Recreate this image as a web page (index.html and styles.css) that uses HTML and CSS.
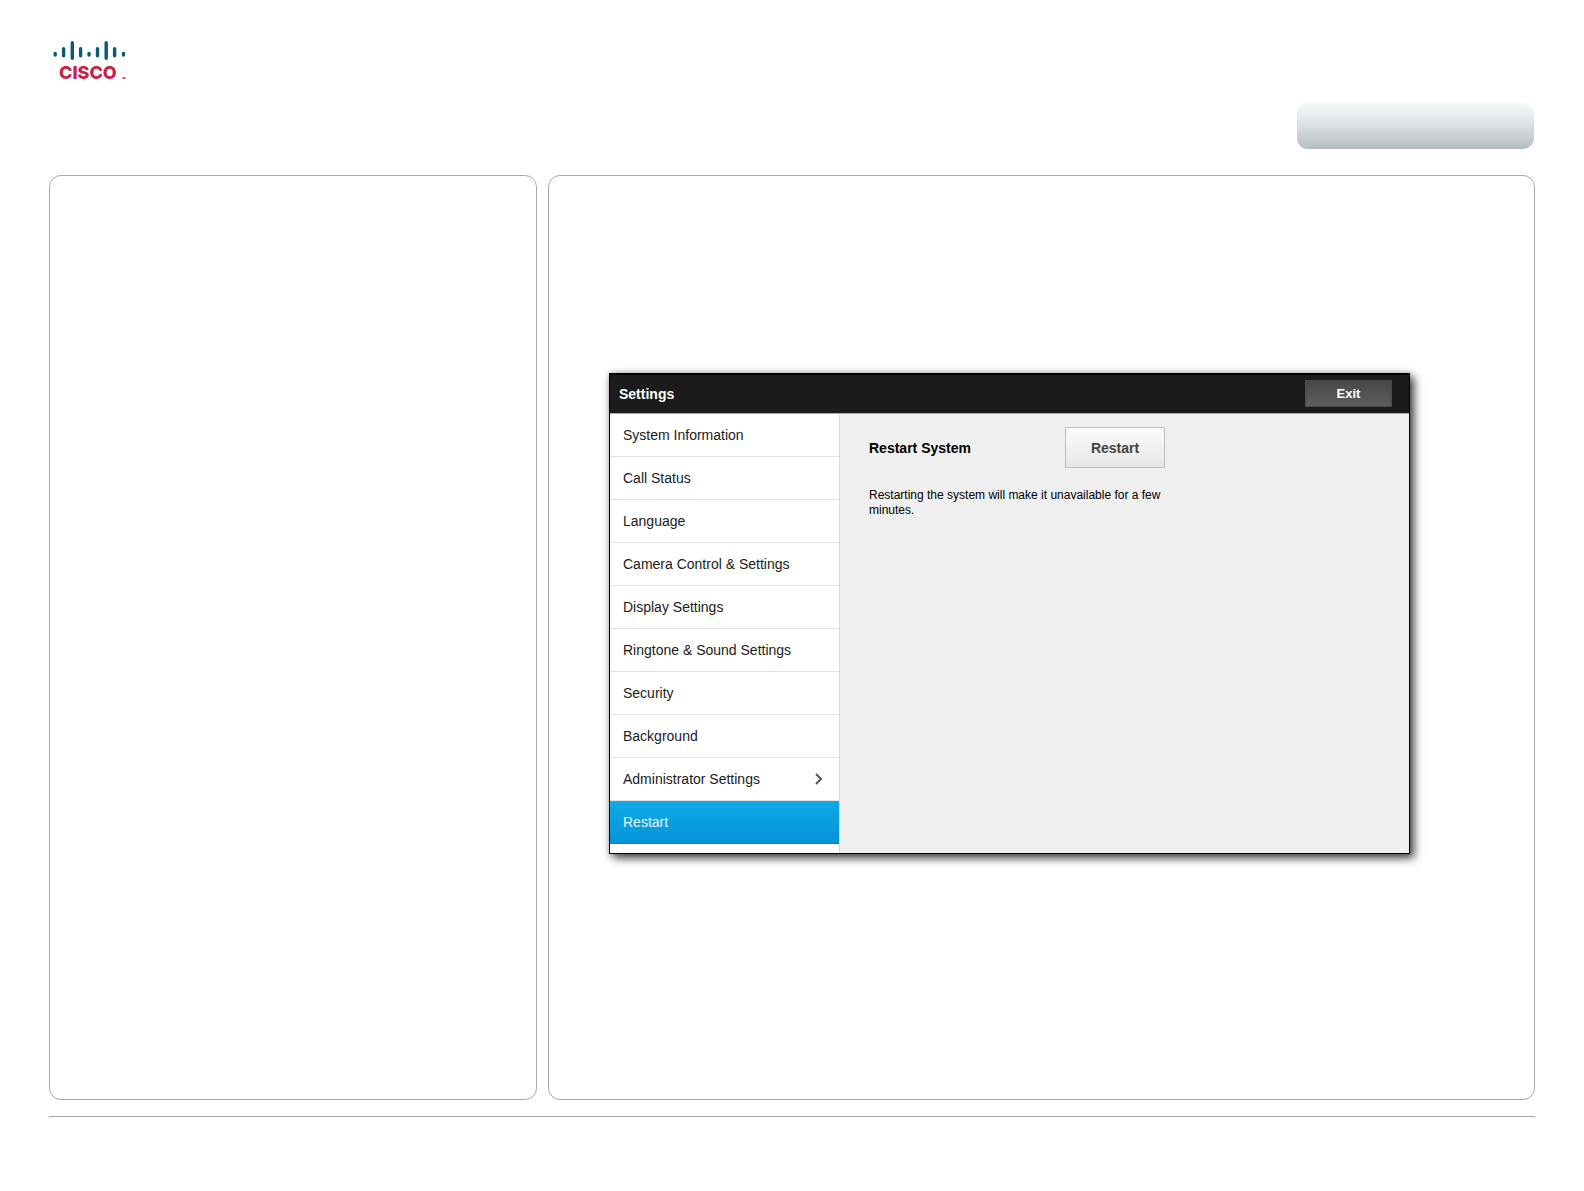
FILE: index.html
```html
<!DOCTYPE html>
<html lang="en">

<head>
    <meta charset="UTF-8">
    <meta name="viewport" content="width=device-width, initial-scale=1.0">
    <title>Settings - Restart</title>
    <link rel="stylesheet" href="styles.css">
</head>

<body>
    <header class="top">
        <svg class="logo" width="76" height="42" viewBox="0 0 76 42" role="img" aria-label="Cisco">
            <g stroke="#0b5a70" stroke-width="3.4" stroke-linecap="round">
                <path d="M2.200 13.500v1.500M10.600 8.700v7M19.300 2.700v15.500M27.600 8.700v7M36 13.500v1.500M44.500 8.700v7M53.200 2.700v15.500M61.600 8.700v7M70.500 13.500v1.500" />
            </g>
            <text class="logo-name" x="6" y="39">CISCO</text>
            <path d="M69.500 38h3" stroke="#c8204c" stroke-width="1.500" />
        </svg>
        <button class="tab" type="button" aria-label="Contents"></button>
    </header>

    <main class="panels">
        <aside class="panel"></aside>

        <section class="panel content">
            <div class="window">
                <div class="title-bar">
                    <h1>Settings</h1>
                    <button class="exit" type="button">Exit</button>
                </div>
                <div class="window-body">
                    <nav class="menu">
                        <a href="#">System Information</a>
                        <a href="#">Call Status</a>
                        <a href="#">Language</a>
                        <a href="#">Camera Control &amp; Settings</a>
                        <a href="#">Display Settings</a>
                        <a href="#">Ringtone &amp; Sound Settings</a>
                        <a href="#">Security</a>
                        <a href="#">Background</a>
                        <a href="#">Administrator Settings
                            <svg width="8" height="12" viewBox="0 0 8 12" fill="none" stroke="#555" stroke-width="2">
                                <path d="M1 1l5 5-5 5" />
                            </svg>
                        </a>
                        <a href="#" class="active">Restart</a>
                    </nav>
                    <div class="detail">
                        <div class="setting">
                            <h2>Restart System</h2>
                            <button class="restart" type="button">Restart</button>
                        </div>
                        <p>Restarting the system will make it unavailable for a few minutes.</p>
                    </div>
                </div>
            </div>
        </section>
    </main>

    <footer class="bottom"></footer>
</body>

</html>
```
FILE: styles.css
```css
* {
    box-sizing: border-box;
}

body {
    display: flex;
    flex-direction: column;
    min-height: 100vh;
    margin: 0;
    padding: 40px 49px 0;
    background-color: white;
    color: #111;
    font-family: "Liberation Sans", Arial, sans-serif;
    font-size: 14px;
}

h1,
h2,
p {
    margin: 0;
}

button {
    font-family: inherit;
    cursor: pointer;
}

.top {
    display: flex;
    justify-content: space-between;
    align-items: flex-start;
    padding: 0 1px 0 4px;
}

.logo-name {
    font-family: Inter, sans-serif;
    font-size: 18px;
    font-weight: 800;
    fill: #c8204c;
}

.tab {
    width: 237px;
    height: 46px;
    margin-top: 63px;
    border: none;
    border-radius: 11px;
    background: linear-gradient(#f6f9f9, #d9dfe2 50%, #bcc5c8 90%, #b0b9bb);
}

.panels {
    display: grid;
    grid-template-columns: 488fr 987fr;
    gap: 11px;
    flex: 1;
    margin-top: 26px;
}

.panel {
    border: 1px solid #a9a9a9;
    border-radius: 12px;
}

.content {
    padding: 197px 60px 40px;
}

.window {
    max-width: 801px;
    border: 1px solid black;
    box-shadow: 4px 4px 9px rgba(0, 0, 0, 0.75), 0 0 6px rgba(0, 0, 0, 0.2);
}

.title-bar {
    display: flex;
    justify-content: space-between;
    align-items: center;
    padding: 5px 17px 6px 9px;
    border-top: 1px solid black;
    border-bottom: 1px solid #aaa;
    background-color: #1b1b1b;
    color: white;
}

.title-bar h1 {
    font-size: 14px;
}

.exit {
    width: 87px;
    height: 27px;
    border: 1px solid #4a4a4a;
    background: linear-gradient(#484848, #5e5e5e);
    color: white;
    font-size: 13px;
    font-weight: bold;
}

.window-body {
    display: flex;
}

.menu {
    width: 230px;
    padding-bottom: 9px;
    border-right: 1px solid #d8d8d8;
    background-color: white;
}

.menu a {
    display: flex;
    justify-content: space-between;
    align-items: center;
    height: 43px;
    padding: 0 16px 0 13px;
    border-bottom: 1px solid #e2e2e2;
    color: #1b1b1b;
    text-decoration: none;
}

.menu .active {
    border-bottom-color: #0a86c2;
    background: linear-gradient(#0eabe6, #0594d9);
    color: #e8f7ff;
}

.detail {
    flex: 1;
    padding: 13px 29px;
    background-color: #efefef;
    color: black;
}

.setting {
    display: flex;
    justify-content: space-between;
    align-items: center;
    max-width: 296px;
}

.setting h2 {
    font-size: 14px;
}

.restart {
    width: 100px;
    height: 41px;
    border: 1px solid #bdbdbd;
    background: linear-gradient(#fcfcfc, #e6e6e6);
    color: #444;
    font-size: 14px;
    font-weight: bold;
}

.detail p {
    max-width: 300px;
    margin-top: 20px;
    font-size: 12px;
    line-height: 15px;
}

.bottom {
    height: 75px;
    margin-top: 16px;
    border-top: 1px solid #a3a3a3;
}
```
